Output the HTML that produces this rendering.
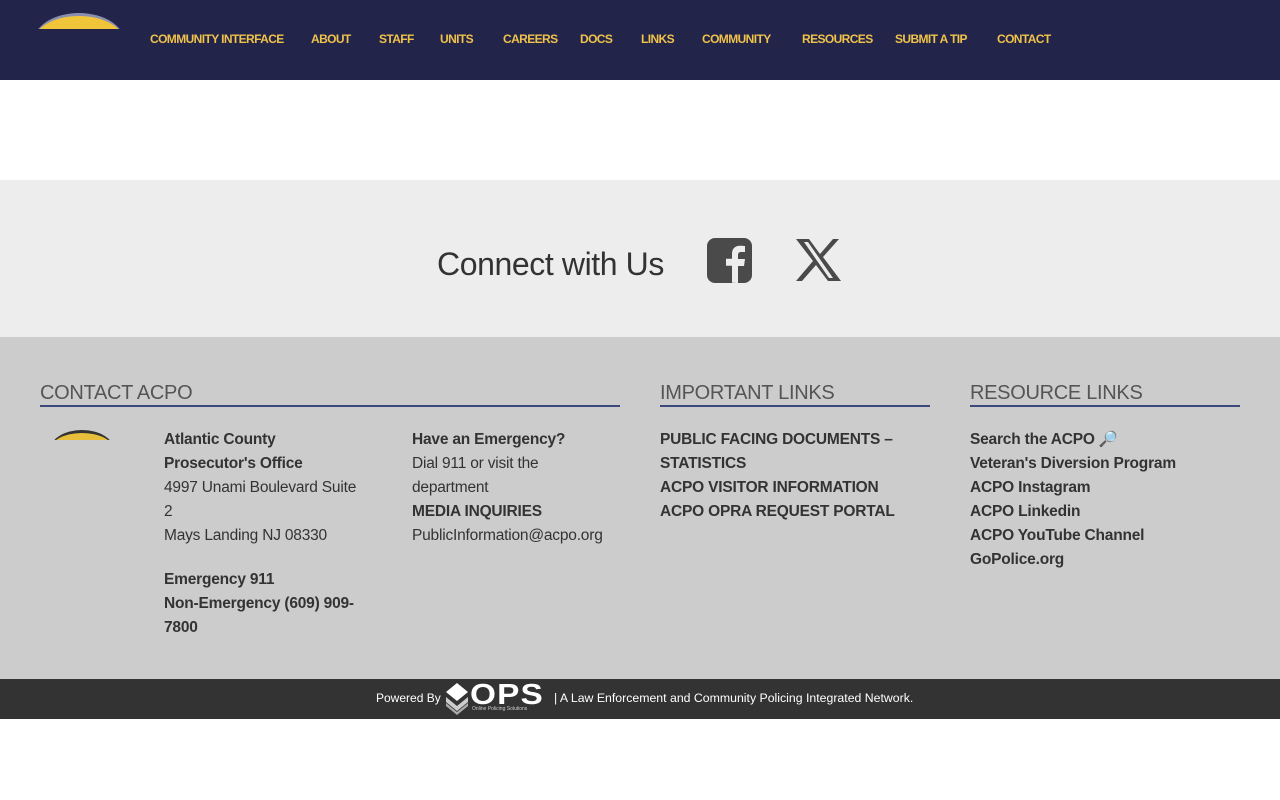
<!DOCTYPE html>
<html><head><meta charset="utf-8"><style>
*{margin:0;padding:0;box-sizing:border-box}
body{width:1280px;height:800px;background:#fff;font-family:"Liberation Sans",sans-serif;position:relative;overflow:hidden}
.nav{position:absolute;left:0;top:0;width:1280px;height:80px;background:#23244a}
.nav a{position:absolute;top:32px;font-size:12px;font-weight:bold;color:#efc24a;letter-spacing:-0.6px;text-decoration:none;white-space:nowrap}
.logo{position:absolute;left:33px;top:13px;width:92px;height:16px;overflow:hidden}
.logo div{width:92px;height:60px;border-radius:50%;background:#f0c53a;border-top:3px solid #8a8fb0}
.connect{position:absolute;top:180px;left:0;width:1280px;height:157px;background:#ededed}
.foot{position:absolute;top:337px;left:0;width:1280px;height:342px;background:#cccccc;color:#333}
.bar{position:absolute;top:679px;left:0;width:1280px;height:40px;background:#333;color:#fff;font-size:12px}
h3{position:absolute;top:45px;font-size:20px;font-weight:normal;color:#555;border-bottom:2px solid #3b4a7a;padding-bottom:0;height:25px;letter-spacing:-0.3px}
.t{position:absolute;font-size:15.5px;line-height:24px;letter-spacing:-0.2px;white-space:nowrap}
b{font-weight:bold}
</style></head><body>
<div class="nav">
<div class="logo"><div></div></div>
<a style="left:150px">COMMUNITY INTERFACE</a>
<a style="left:311px">ABOUT</a>
<a style="left:379px">STAFF</a>
<a style="left:440px">UNITS</a>
<a style="left:503px">CAREERS</a>
<a style="left:580px">DOCS</a>
<a style="left:641px">LINKS</a>
<a style="left:702px">COMMUNITY</a>
<a style="left:802px">RESOURCES</a>
<a style="left:895px">SUBMIT A TIP</a>
<a style="left:997px">CONTACT</a>
</div>
<div class="connect">
<div style="position:absolute;left:437px;top:66px;font-size:32px;color:#333;letter-spacing:-0.4px">Connect with Us</div>
<svg style="position:absolute;left:707px;top:58px" width="45" height="45" viewBox="0 0 45 45"><rect width="45" height="45" rx="8" fill="#4a4a4a"/><path d="M31 45V28h6l1-7h-7v-4c0-2 1-3 3-3h4V8c-1 0-3-.3-5-.3-5 0-8 3-8 8v5h-6v7h6v17z" fill="#ededed"/></svg>
<svg style="position:absolute;left:795px;top:59px" width="46" height="42" viewBox="0 0 46 42"><path d="M1 0h13l11 15L38 0h6L28 18l18 24H33L21 26 7 42H1l17-20z" fill="#4a4a4a"/><path d="M9 3h4l25 36h-4z" fill="#ededed"/></svg>
</div>
<div class="foot">
<h3 style="left:40px;width:580px">CONTACT ACPO</h3>
<h3 style="left:660px;width:270px">IMPORTANT LINKS</h3>
<h3 style="left:970px;width:270px">RESOURCE LINKS</h3>
<div style="position:absolute;left:50px;top:93px;width:64px;height:10px;overflow:hidden"><div style="width:64px;height:40px;border-radius:50%;background:#e8bf3a;border-top:3px solid #333"></div></div>
<div class="t" style="left:164px;top:91px"><b>Atlantic County<br>Prosecutor's Office</b><br>4997 Unami Boulevard Suite<br>2<br>Mays Landing NJ 08330<div style="height:20px"></div><b>Emergency 911<br>Non-Emergency (609) 909-<br>7800</b></div>
<div class="t" style="left:412px;top:91px"><b>Have an Emergency?</b><br>Dial 911 or visit the<br>department<br><b>MEDIA INQUIRIES</b><br>PublicInformation@acpo.org</div>
<div class="t" style="left:660px;top:91px"><b>PUBLIC FACING DOCUMENTS –<br>STATISTICS<br>ACPO VISITOR INFORMATION<br>ACPO OPRA REQUEST PORTAL</b></div>
<div class="t" style="left:970px;top:91px"><b>Search the ACPO <span style="color:#3a7bd5">🔎</span><br>Veteran's Diversion Program<br>ACPO Instagram<br>ACPO Linkedin<br>ACPO YouTube Channel<br>GoPolice.org</b></div>
</div>
<div class="bar">
<span style="position:absolute;left:376px;top:12px">Powered By</span>
<svg style="position:absolute;left:445px;top:4px" width="24" height="32" viewBox="0 0 24 32"><path d="M12 0l11 9-11 9L1 9z" fill="#fff"/><path d="M1 14l11 9 11-9v5l-11 9-11-9z" fill="#ccc"/><path d="M1 20l11 9 11-9v3l-11 9-11-9z" fill="#aaa"/></svg>
<span style="position:absolute;left:470px;top:0px;font-size:29px;font-weight:900;letter-spacing:1px;transform:scaleX(1.15);transform-origin:left">OPS</span>
<span style="position:absolute;left:472px;top:27px;font-size:5px;color:#ccc">Online Policing Solutions</span>
<span style="position:absolute;left:554px;top:12px;letter-spacing:0px;font-size:12.3px">| A Law Enforcement and Community Policing Integrated Network.</span>
</div>
</body></html>
